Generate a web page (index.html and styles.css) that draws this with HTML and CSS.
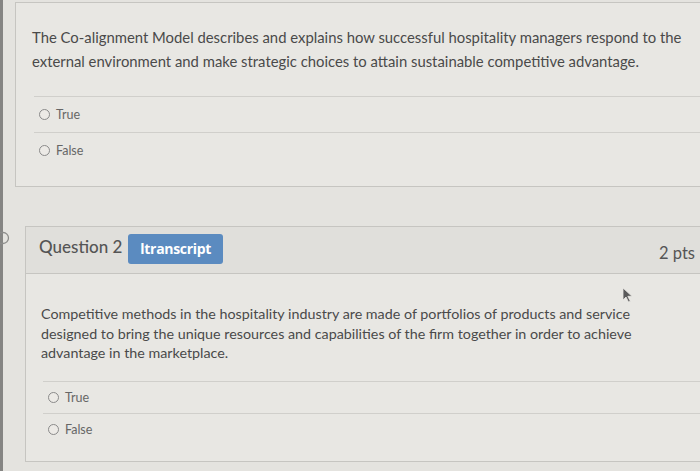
FILE: index.html
```html
<!DOCTYPE html>
<html>
<head>
<meta charset="utf-8">
<link rel="stylesheet" href="styles.css">
</head>
<body>
<div class="frame">
  <div class="edge"></div>
  <main class="content">
    <section class="card card-one">
      <p class="qtext qtext-one">The Co-alignment Model describes and explains how successful hospitality managers respond to the<br>external environment and make strategic choices to attain sustainable competitive advantage.</p>
      <ul class="answers answers-one">
        <li class="answer"><span class="radio"></span><span>True</span></li>
        <li class="answer"><span class="radio"></span><span>False</span></li>
      </ul>
    </section>

    <section class="card card-two">
      <svg class="flag" width="12" height="14" viewBox="0 0 12 14"><path d="M-4 1.5 H3 A5.5 5.5 0 0 1 3 12.5 H-4" fill="none" stroke="#8c8c8a" stroke-width="1.3"/></svg>
      <header class="qhead">
        <h2 class="qtitle">Question 2</h2>
        <span class="badge">ltranscript</span>
        <span class="pts">2 pts</span>
      </header>
      <div class="qbody">
        <p class="qtext qtext-two">Competitive methods in the hospitality industry are made of portfolios of products and service<br>designed to bring the unique resources and capabilities of the firm together in order to achieve<br>advantage in the marketplace.</p>
        <ul class="answers answers-two">
          <li class="answer"><span class="radio"></span><span>True</span></li>
          <li class="answer"><span class="radio"></span><span>False</span></li>
        </ul>
      </div>
      <svg class="cursor" width="12" height="16" viewBox="0 0 12 16"><path d="M1 1 L1 13 L4 10 L6.5 15 L8.3 14.2 L5.8 9.3 L10 9.3 Z" fill="#5a5a5a" stroke="#e8e7e3" stroke-width="0.8"/></svg>
    </section>
  </main>
</div>
</body>
</html>
```

FILE: styles.css
```css
html, body {
  margin: 0;
  padding: 0;
  overflow: hidden;
}
body {
  background: #e4e3df;
  font-family: Lato, "Open Sans", sans-serif;
  color: #4e4e4e;
  width: 700px;
  height: 471px;
}
.frame {
  display: flex;
  height: 471px;
  overflow: hidden;
}
.edge {
  width: 3px;
  flex: none;
  background: #858583;
}
.content {
  flex: 1;
  min-width: 0;
  display: flex;
  flex-direction: column;
}
.card {
  background: #e8e7e3;
  border: 1px solid #c6c5c1;
  border-right: none;
}
.card-one {
  margin-top: 2px;
  margin-left: 12px;
  height: 185px;
  box-sizing: border-box;
  padding: 22px 0 0 16px;
}
.qtext {
  margin: 0;
  white-space: nowrap;
  color: #4a4a4a;
}
.qtext-one {
  font-size: 14.85px;
  line-height: 24px;
}
.answers {
  list-style: none;
  padding: 0;
  margin: 0;
}
.answer {
  display: flex;
  align-items: center;
  gap: 6px;
  border-top: 1px solid #d0cfcb;
  font-size: 12.5px;
  color: #666;
}
.radio {
  width: 9px;
  height: 9px;
  border: 1px solid #8a8a8a;
  border-radius: 50%;
  background: #eceae6;
  flex: none;
}
.answers-one {
  margin: 23px 0 0 2px;
}
.answers-one .answer {
  height: 35px;
  padding-left: 5px;
}
.card-two {
  position: relative;
  margin-top: 39px;
  margin-left: 22px;
  height: 236px;
  box-sizing: border-box;
}
.flag {
  position: absolute;
  left: -26px;
  top: 4px;
}
.qhead {
  display: flex;
  align-items: center;
  height: 46px;
  background: #e0dfdb;
  border-bottom: 1px solid #c6c5c1;
  padding-left: 13px;
}
.qtitle {
  margin: -7px 6px 0 0;
  font-size: 17px;
  font-weight: 500;
  color: #555;
}
.badge {
  background: #5b8bc0;
  color: #fff;
  font-family: "Open Sans", Lato, sans-serif;
  font-weight: 700;
  font-size: 14px;
  letter-spacing: -0.3px;
  padding: 0 12px;
  height: 30px;
  line-height: 30px;
  border-radius: 3px;
  margin-top: 7px;
  align-self: flex-start;
}
.pts {
  margin-left: auto;
  font-size: 16.5px;
  color: #555;
  margin-right: 5px;
  margin-top: 5px;
}
.qbody {
  padding: 30px 0 0 15px;
}
.qtext-two {
  font-size: 14.3px;
  line-height: 19.5px;
}
.answers-two {
  margin: 18px 0 0 2px;
}
.answers-two .answer {
  height: 31px;
  padding-left: 5px;
}
.cursor {
  position: absolute;
  left: 596px;
  top: 60px;
}
```
